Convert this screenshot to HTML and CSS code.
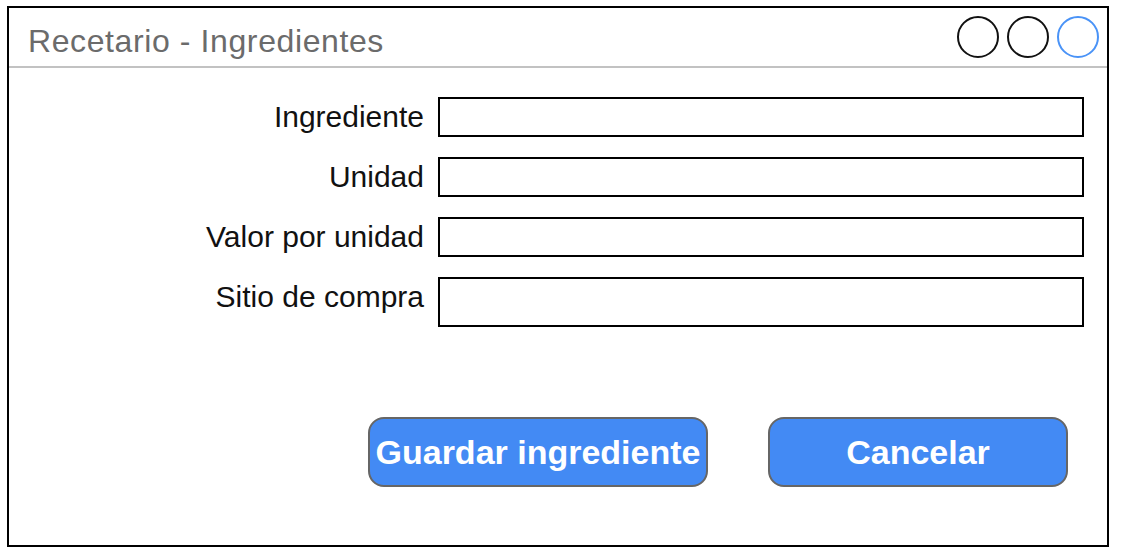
FILE: index.html
```html
<!DOCTYPE html>
<html lang="es">
<head>
    <meta charset="UTF-8">
    <meta name="viewport" content="width=device-width, initial-scale=1.0">
    <link rel="stylesheet" href="styles.css">
</head>
<body>
<!-- Ventana del recetario -->
<div class="window">
    <div class="title-bar">
        <span class="title">Recetario - Ingredientes</span>
        <div class="window-buttons">
            <span class="circle"></span>
            <span class="circle"></span>
            <span class="circle active"></span>
        </div>
    </div>

    <!-- Formulario de ingrediente -->
    <div class="form">
        <label class="label">Ingrediente</label>
        <div class="field"></div>
        <label class="label">Unidad</label>
        <div class="field"></div>
        <label class="label">Valor por unidad</label>
        <div class="field"></div>
        <label class="label">Sitio de compra</label>
        <div class="field"></div>
    </div>

    <div class="actions">
        <button class="btn btn-save">Guardar ingrediente</button>
        <button class="btn btn-cancel">Cancelar</button>
    </div>
</div>
</body>
</html>
```

FILE: styles.css
```css
body {
    margin: 0;
    background: #fff;
    font-family: 'Liberation Sans', Arial, sans-serif;
}

.window {
    box-sizing: border-box;
    margin: 6px 0 0 7px;
    width: 1102px;
    height: 541px;
    border: 2px solid #000;
    display: flex;
    flex-direction: column;
}

/* Barra de título */
.title-bar {
    height: 58px;
    border-bottom: 2px solid #c2c2c2;
    display: flex;
    align-items: center;
    justify-content: space-between;
    padding: 0 8px 0 19px;
}

.title {
    color: #6b6b6b;
    font-size: 32px;
    letter-spacing: 0.6px;
    padding-top: 8px;
}

.window-buttons {
    display: flex;
    gap: 8px;
}

.circle {
    box-sizing: border-box;
    width: 42px;
    height: 42px;
    border: 2px solid #111;
    border-radius: 50%;
}

.circle.active {
    border-color: #4a93f7;
}

/* Formulario */
.form {
    display: grid;
    grid-template-columns: 415px 646px;
    grid-template-rows: 40px 40px 40px 50px;
    column-gap: 14px;
    row-gap: 20px;
    padding-top: 29px;
}

.label {
    font-size: 30px;
    line-height: 40px;
    color: #111;
    text-align: right;
}

.field {
    border: 2px solid #000;
}

/* Botones */
.actions {
    display: flex;
    gap: 60px;
    padding: 90px 0 0 359px;
}

.btn {
    box-sizing: border-box;
    height: 70px;
    background: #438af4;
    border: 2px solid #666;
    border-radius: 16px;
    color: #fff;
    font-family: 'Liberation Sans', Arial, sans-serif;
    font-size: 34px;
    font-weight: bold;
    padding: 0;
}

.btn-save {
    width: 340px;
}

.btn-cancel {
    width: 300px;
}
```
